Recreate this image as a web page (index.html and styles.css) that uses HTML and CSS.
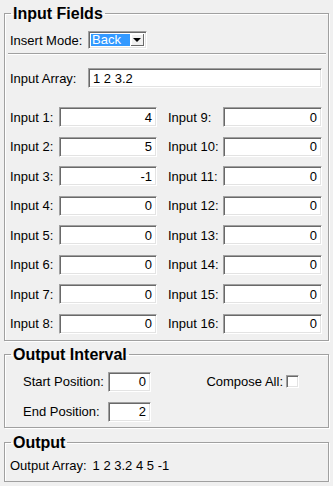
FILE: index.html
```html
<!DOCTYPE html>
<html lang="en">

<head>
  <meta charset="UTF-8">
  <title>Input Fields</title>
  <link rel="stylesheet" href="styles.css">
</head>

<body>
  <fieldset class="group group-input">
    <legend>Input Fields</legend>
    <div class="mode-row">
      <span class="label">Insert Mode:</span>
      <div class="combo">
        <span class="combo-value">Back</span>
        <span class="combo-btn"><span class="arrow"></span></span>
      </div>
    </div>
    <hr class="sep">
    <div class="array-row">
      <span class="label">Input Array:</span>
      <div class="field field-text">1 2 3.2</div>
    </div>
    <div class="inputs">
      <span class="label">Input 1:</span><div class="field">4</div>
      <span class="label label-right">Input 9:</span><div class="field">0</div>
      <span class="label">Input 2:</span><div class="field">5</div>
      <span class="label label-right">Input 10:</span><div class="field">0</div>
      <span class="label">Input 3:</span><div class="field">-1</div>
      <span class="label label-right">Input 11:</span><div class="field">0</div>
      <span class="label">Input 4:</span><div class="field">0</div>
      <span class="label label-right">Input 12:</span><div class="field">0</div>
      <span class="label">Input 5:</span><div class="field">0</div>
      <span class="label label-right">Input 13:</span><div class="field">0</div>
      <span class="label">Input 6:</span><div class="field">0</div>
      <span class="label label-right">Input 14:</span><div class="field">0</div>
      <span class="label">Input 7:</span><div class="field">0</div>
      <span class="label label-right">Input 15:</span><div class="field">0</div>
      <span class="label">Input 8:</span><div class="field">0</div>
      <span class="label label-right">Input 16:</span><div class="field">0</div>
    </div>
  </fieldset>

  <fieldset class="group group-interval">
    <legend>Output Interval</legend>
    <div class="interval">
      <span class="label">Start Position:</span><div class="field">0</div>
      <div class="compose"><span class="label">Compose All:</span><span class="check"></span></div>
      <span class="label">End Position:</span><div class="field">2</div>
    </div>
  </fieldset>

  <fieldset class="group group-output">
    <legend>Output</legend>
    <div class="output-row">
      <span class="label">Output Array:</span>
      <span class="value">1 2 3.2 4 5 -1</span>
    </div>
  </fieldset>
</body>

</html>
```

FILE: styles.css
```css
* {
  box-sizing: border-box;
}

body {
  margin: 0;
  padding: 4px 4px 0;
  background-color: #f0f0f0;
  color: #000000;
  font-family: "Liberation Sans", Arial, sans-serif;
  font-size: 13px;
  line-height: 15px;
}

.group {
  margin: 0;
  padding: 0 5px;
  border: 1px solid #a0a0a0;
  box-shadow: inset 1px 1px 0 #ffffff, 1px 1px 0 #ffffff;
  min-width: 0;
}

.group legend {
  margin-left: 1px;
  padding: 0 2px;
  font-weight: bold;
  font-size: 16px;
  line-height: 19px;
}

.group-input {
  padding-bottom: 6px;
}

.group-interval {
  margin-top: 4px;
  padding-bottom: 5px;
}

.group-output {
  margin-top: 5px;
  padding-bottom: 8px;
}

.label {
  white-space: nowrap;
}

/* sunken text box */
.field {
  height: 20px;
  padding: 0 4px;
  background-color: #ffffff;
  border: 1px solid;
  border-color: #a0a0a0 #ffffff #ffffff #a0a0a0;
  box-shadow: inset 1px 1px 0 #696969, inset -1px -1px 0 #e3e3e3;
  display: flex;
  align-items: center;
  justify-content: flex-end;
}

.field-text {
  justify-content: flex-start;
  padding-left: 4px;
}

.mode-row {
  margin-top: 8px;
  display: flex;
  align-items: center;
}

.mode-row .label {
  width: 78px;
}

.combo {
  width: 59px;
  height: 18px;
  padding: 2px;
  background-color: #ffffff;
  border: 1px solid;
  border-color: #a0a0a0 #ffffff #ffffff #a0a0a0;
  box-shadow: inset 1px 1px 0 #696969, inset -1px -1px 0 #e3e3e3;
  display: flex;
}

.combo-value {
  flex: 1;
  background-color: #3399ff;
  color: #ffffff;
  padding-left: 1px;
  line-height: 12px;
  font-size: 13px;
}

.combo-btn {
  width: 13px;
  margin-left: 1px;
  background-color: #f0f0f0;
  border-right: 1px solid #696969;
  border-bottom: 1px solid #696969;
  box-shadow: inset 1px 1px 0 #ffffff;
  display: flex;
  align-items: center;
  justify-content: center;
}

.arrow {
  width: 0;
  height: 0;
  border-left: 4px solid transparent;
  border-right: 4px solid transparent;
  border-top: 4px solid #000000;
}

.sep {
  margin: 4px -3px 0 -2px;
  height: 0;
  border: none;
  border-top: 1px solid #a0a0a0;
  border-bottom: 1px solid #ffffff;
}

.array-row {
  margin-top: 13px;
  display: flex;
  align-items: center;
}

.array-row .label {
  width: 78px;
}

.array-row .field {
  width: 234px;
}

.inputs {
  margin-top: 19px;
  display: grid;
  grid-template-columns: 49px 98px 66px 99px;
  grid-auto-rows: 20px;
  row-gap: 9.57px;
  align-items: center;
}

.label-right {
  padding-left: 11px;
}

.interval {
  margin-top: 8px;
  padding-left: 13px;
  padding-right: 24px;
  display: grid;
  grid-template-columns: 85px 43px 1fr;
  grid-auto-rows: 20px;
  row-gap: 10px;
  align-items: center;
}

.compose {
  display: flex;
  align-items: center;
  justify-content: flex-end;
  gap: 3px;
}

.check {
  width: 13px;
  height: 13px;
  background-color: #ffffff;
  border: 1px solid;
  border-color: #a0a0a0 #ffffff #ffffff #a0a0a0;
  box-shadow: inset 1px 1px 0 #696969, inset -1px -1px 0 #e3e3e3;
}

.output-row {
  margin-top: 6px;
  display: flex;
  gap: 6px;
}
```
